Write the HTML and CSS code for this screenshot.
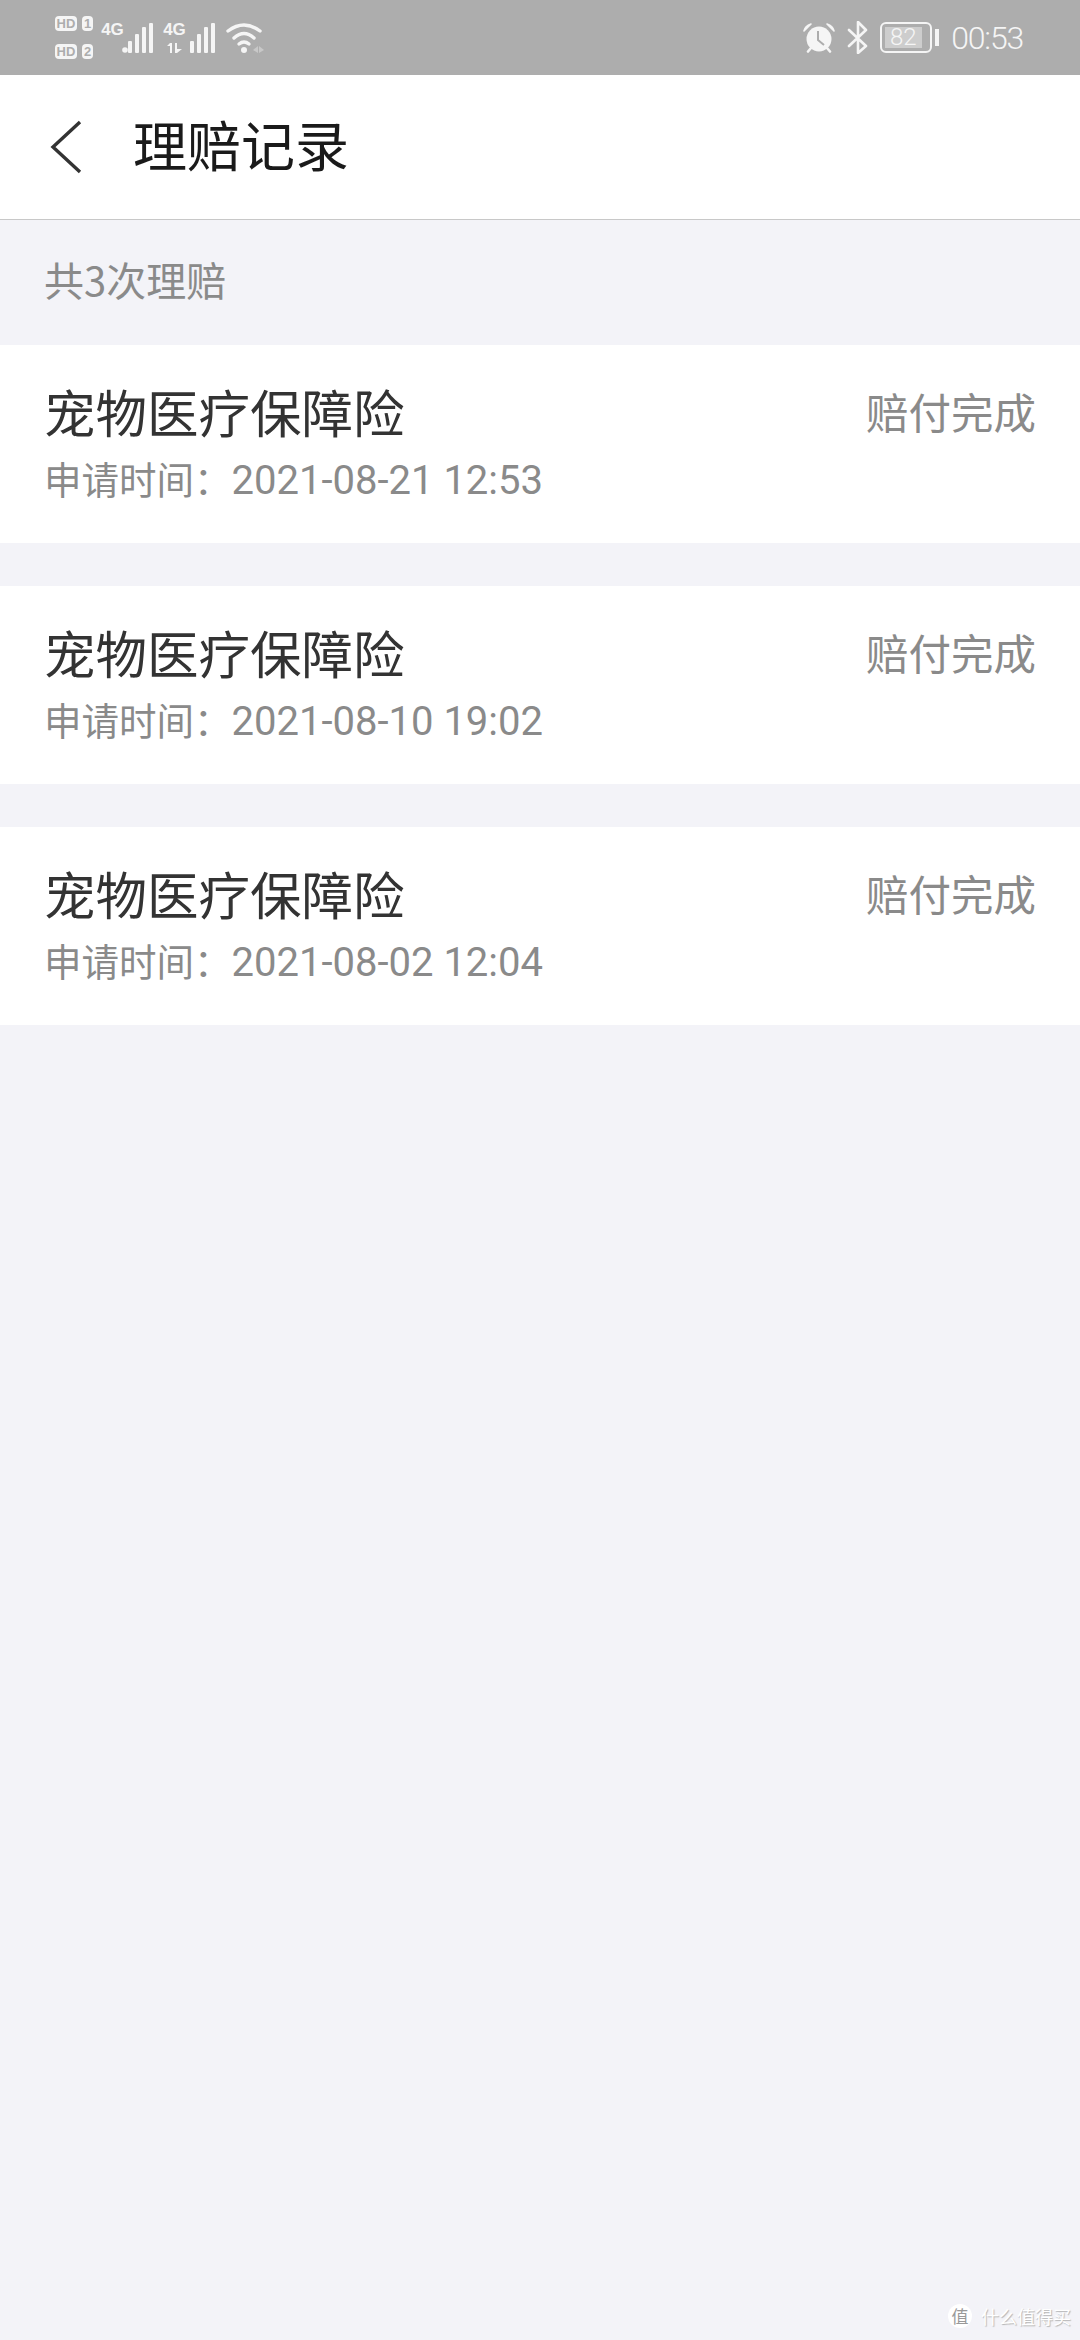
FILE: index.html
```html
<!DOCTYPE html>
<html lang="zh-CN">
<head>
    <meta charset="UTF-8">
    <meta name="viewport" content="width=device-width, initial-scale=1.0">
    <title>理赔记录</title>
    <link rel="stylesheet" href="styles.css">
</head>
<body>
    <div class="status-bar">
        <div class="status-left">
            <div class="sim-tags">
                <div class="sim-row"><span class="hd">HD</span><span class="sim-no">1</span></div>
                <div class="sim-row"><span class="hd">HD</span><span class="sim-no">2</span></div>
            </div>
            <div class="net net-first">
                <div class="net-stack">
                    <span class="net-label">4G</span>
                </div>
                <svg class="bars" width="32" height="30" viewBox="0 0 32 30" fill="#f5f5f5">
                    <circle cx="3" cy="27" r="2.8"/>
                    <rect x="6" y="18" width="4" height="12" rx="1"/>
                    <rect x="13" y="11" width="4" height="19" rx="1"/>
                    <rect x="20" y="4" width="4" height="26" rx="1"/>
                    <rect x="27" y="0" width="4" height="30" rx="1"/>
                </svg>
            </div>
            <div class="net net-second">
                <div class="net-stack">
                    <span class="net-label">4G</span>
                    <svg class="net-arrows" width="15" height="10" viewBox="0 0 15 10" fill="#f5f5f5">
                        <path d="M3 0 H5 V10 H3 V3 H0 Z"/>
                        <path d="M8 0 H10 V6 L15 6 L10 10 H8 Z"/>
                    </svg>
                </div>
                <svg class="bars" width="26" height="30" viewBox="0 0 26 30" fill="#f5f5f5">
                    <rect x="0" y="18" width="4" height="12" rx="1"/>
                    <rect x="7" y="11" width="4" height="19" rx="1"/>
                    <rect x="14" y="4" width="4" height="26" rx="1"/>
                    <rect x="21" y="0" width="4" height="30" rx="1"/>
                </svg>
            </div>
            <svg class="wifi" width="38" height="30" viewBox="0 0 38 30" fill="none" stroke="#f5f5f5" stroke-linecap="round" stroke-width="3.4">
                <path d="M2 8 Q18 -4 34 8"/>
                <path d="M8 15 Q18 6 28 15"/>
                <path d="M13 21 Q18 17 23 21"/>
                <circle cx="18" cy="27" r="3" fill="#f5f5f5" stroke="none"/>
                <path d="M32 23 V30 L27 27 Z M33 23 L38 27 L33 30 Z" fill="#c8c8c8" stroke="none"/>
            </svg>
        </div>
        <div class="status-right">
            <svg class="alarm" width="32" height="30" viewBox="0 0 32 30">
                <path d="M1 8 Q2 3 8 1 Z M31 8 Q30 3 24 1 Z" fill="#f5f5f5" stroke="#f5f5f5" stroke-width="1.6" stroke-linejoin="round"/>
                <path d="M5 28.5 L8 25 M27 28.5 L24 25" stroke="#f5f5f5" stroke-width="2.6" stroke-linecap="round"/>
                <circle cx="16" cy="16" r="12.5" fill="#f5f5f5"/>
                <path d="M15 8 V17 L21 22" fill="none" stroke="#adadad" stroke-width="2"/>
            </svg>
            <svg class="bt" width="21" height="33" viewBox="0 0 21 33" fill="none" stroke="#f5f5f5" stroke-width="2.6" stroke-linejoin="round" stroke-linecap="round">
                <path d="M2 9 L19 25 L11 32 V1 L19 9 L2 25"/>
            </svg>
            <div class="battery">
                <div class="battery-box"><span class="battery-fill">82</span></div>
                <div class="battery-cap"></div>
            </div>
            <span class="clock">00:53</span>
        </div>
    </div>

    <div class="top-bar">
        <svg class="back" width="34" height="54" viewBox="0 0 34 54" fill="none" stroke="#333" stroke-width="3.4">
            <path d="M31 2 L4 27 L31 52"/>
        </svg>
        <h1>理赔记录</h1>
    </div>

    <p class="count">共3次理赔</p>

    <div class="claim">
        <div class="claim-info">
            <h2>宠物医疗保障险</h2>
            <p>申请时间：<span class="time">2021-08-21 12:53</span></p>
        </div>
        <span class="claim-status">赔付完成</span>
    </div>
    <div class="claim">
        <div class="claim-info">
            <h2>宠物医疗保障险</h2>
            <p>申请时间：<span class="time">2021-08-10 19:02</span></p>
        </div>
        <span class="claim-status">赔付完成</span>
    </div>
    <div class="claim">
        <div class="claim-info">
            <h2>宠物医疗保障险</h2>
            <p>申请时间：<span class="time">2021-08-02 12:04</span></p>
        </div>
        <span class="claim-status">赔付完成</span>
    </div>

    <div class="watermark">
        <span class="watermark-icon">值</span>
        <span>什么值得买</span>
    </div>
</body>
</html>
```

FILE: styles.css
```css
* {
    margin: 0;
    padding: 0;
    box-sizing: border-box;
    font-family: "Noto Sans CJK SC", "Noto Sans", sans-serif;
}

body {
    position: relative;
    height: 2340px;
    overflow: hidden;
    background: #f3f3f8;
}

.status-bar {
    display: flex;
    justify-content: space-between;
    align-items: center;
    height: 75px;
    padding: 0 57px 0 55px;
    background: #adadad;
    color: #f5f5f5;
}

.status-left,
.status-right {
    display: flex;
    align-items: center;
}

.sim-tags {
    display: flex;
    flex-direction: column;
    gap: 13px;
    margin-right: 11px;
}

.sim-row {
    display: flex;
    gap: 5px;
}

.hd,
.sim-no {
    display: block;
    height: 15px;
    border-radius: 4px;
    background: #f5f5f5;
    color: #adadad;
    font-family: "Liberation Sans", sans-serif;
    font-size: 13px;
    font-weight: bold;
    line-height: 15px;
    text-align: center;
}

.hd {
    width: 22px;
}

.sim-no {
    width: 11px;
}

.net {
    display: flex;
    height: 30px;
}

.net-first {
    gap: 1px;
    margin-right: 12px;
}

.net-second {
    gap: 7px;
    margin-right: 10px;
}

.net-stack {
    display: flex;
    flex-direction: column;
    justify-content: space-between;
    align-items: center;
    width: 17px;
}

.net-label {
    display: block;
    font-family: "Liberation Sans Narrow", "Liberation Sans", sans-serif;
    font-size: 17px;
    font-weight: bold;
    line-height: 14px;
}

.status-right {
    gap: 12px;
}

.battery {
    display: flex;
    align-items: center;
    gap: 3px;
}

.battery-box {
    width: 52px;
    height: 31px;
    padding: 2.5px;
    border: 2.5px solid #f5f5f5;
    border-radius: 6px;
}

.battery-fill {
    display: block;
    width: 37px;
    height: 21px;
    background: #cdcdcd;
    color: #f5f5f5;
    font-family: "Roboto", sans-serif;
    font-size: 24px;
    font-weight: 300;
    line-height: 21px;
    text-align: center;
}

.battery-cap {
    width: 4px;
    height: 17px;
    background: #f5f5f5;
}

.clock {
    font-family: "Roboto", sans-serif;
    font-size: 32px;
    font-weight: 300;
    letter-spacing: -1.2px;
}

.top-bar {
    display: flex;
    align-items: center;
    gap: 50px;
    height: 145px;
    padding-left: 49px;
    border-bottom: 1px solid #c8c8c8;
    background: #fff;
}

h1 {
    margin-bottom: 8px;
    font-size: 54px;
    font-weight: 400;
    color: #1a1a1a;
}

.count {
    height: 125px;
    padding: 34px 0 0 44px;
    font-size: 40px;
    line-height: 50px;
    color: #8a8a8a;
}

.claim {
    display: flex;
    justify-content: space-between;
    align-items: flex-start;
    height: 198px;
    margin-bottom: 43px;
    padding: 34px 44px 0;
    background: #fff;
}

.claim-info h2 {
    font-size: 51.5px;
    font-weight: 400;
    line-height: 64px;
    color: #333;
}

.claim-info p {
    margin-top: 10px;
    font-size: 37.5px;
    line-height: 50px;
    color: #8a8a8a;
}

.time {
    font-family: "Roboto", sans-serif;
    font-size: 40px;
}

.claim-status {
    padding-top: 2px;
    font-size: 42.5px;
    line-height: 60px;
    color: #8a8a8a;
}

.watermark {
    position: absolute;
    right: 9px;
    bottom: 11px;
    display: flex;
    align-items: center;
    gap: 9px;
    font-size: 18px;
    color: #fff;
    text-shadow: 1px 1px 1px #b5b5b5;
}

.watermark-icon {
    width: 24px;
    height: 24px;
    border-radius: 50%;
    background: #fff;
    color: #999;
    font-size: 17px;
    line-height: 24px;
    text-align: center;
    text-shadow: none;
}
```
